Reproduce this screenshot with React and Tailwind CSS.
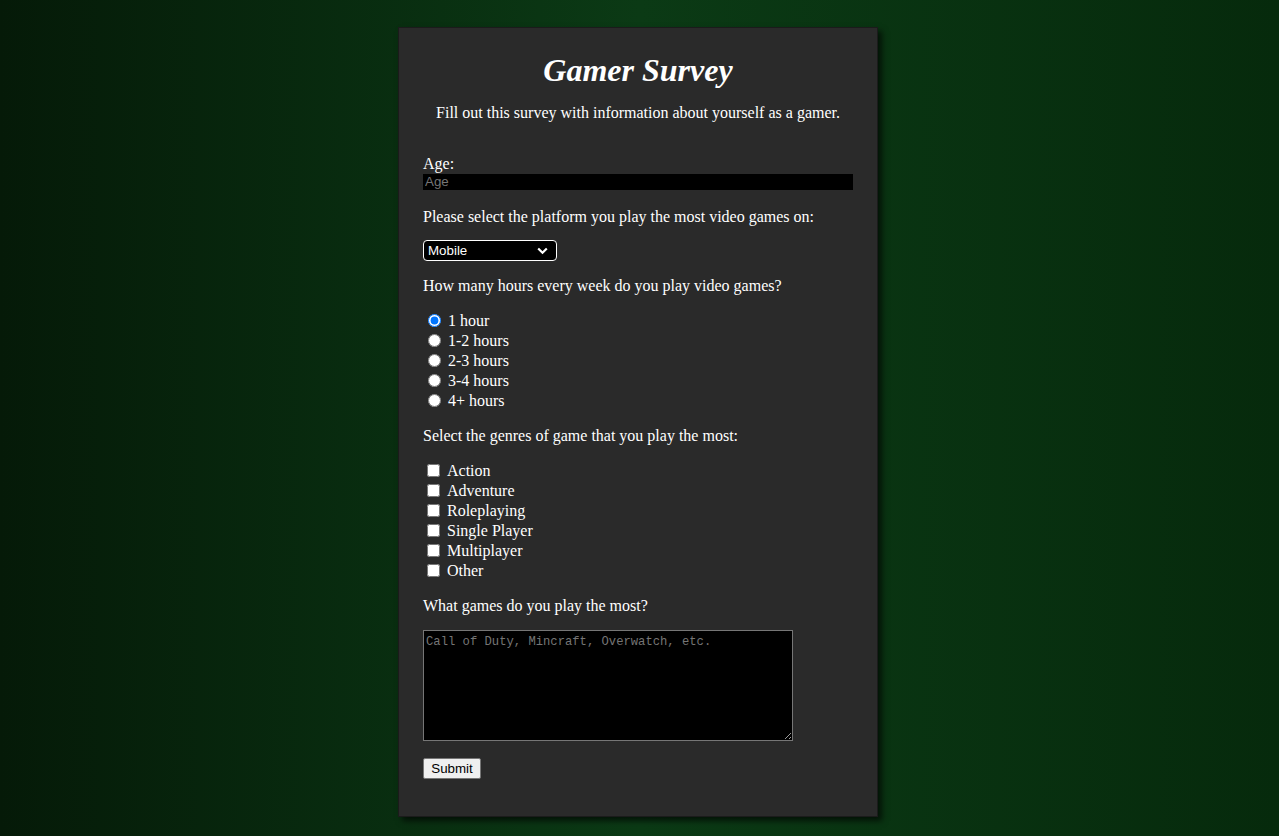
import React from "react";

const serif = { fontFamily: '"Liberation Serif", "Times New Roman", serif' };

export default function App() {
  const hours = ["1 hour", "1-2 hours", "2-3 hours", "3-4 hours", "4+ hours"];
  const genres = ["Action", "Adventure", "Roleplaying", "Single Player", "Multiplayer", "Other"];
  return (
    <div
      className="min-h-[836px] w-full bg-[linear-gradient(to_right,#051a08,#0b3a15_50%,#062a0c)] pt-[27px] pb-[19px] text-white"
      style={serif}
    >
      <div className="ml-[calc(50%-241.5px)] w-[480px] h-[790px] border border-[#1b1b1b] bg-[#2a2a2a] px-6 pt-[22px] shadow-[4px_4px_6px_rgba(0,0,0,0.65)] text-[16px]">
        <h1 className="text-center text-[32px] font-bold italic leading-[40px]">Gamer Survey</h1>
        <p className="mt-[13px] text-center leading-5">Fill out this survey with information about yourself as a gamer.</p>

        <div className="mt-[30px] leading-5 pt-px h-5">Age:</div>
        <input
          type="text"
          placeholder="Age"
          className="mt-px block h-4 w-full bg-black px-[2px] text-[13.33px] text-white outline-none placeholder:text-[#757575]"
          style={{ fontFamily: '"Liberation Sans", Arial, sans-serif' }}
        />

        <div className="mt-4 leading-5 pt-px h-5">Please select the platform you play the most video games on:</div>
        <div className="relative mt-[14px] h-[21px] w-[134px]">
          <select
            defaultValue="Mobile"
            className="block h-[21px] w-[134px] appearance-none rounded-[4px] border border-white bg-black pl-[4px] text-[13.33px] text-white outline-none"
            style={{ fontFamily: '"Liberation Sans", Arial, sans-serif' }}
          >
            <option>Mobile</option>
            <option>PC</option>
            <option>Console</option>
          </select>
          <svg className="pointer-events-none absolute right-[9px] top-[7px]" width="11" height="8" viewBox="0 0 11 8">
            <path d="M1.2 1.5 L5.5 5.8 L9.8 1.5" fill="none" stroke="white" strokeWidth="2.2" />
          </svg>
        </div>

        <div className="mt-[14px] leading-5 pt-px h-5">How many hours every week do you play video games?</div>
        <div className="mt-[15px]">
          {hours.map((h, i) => (
            <label key={h} className="flex h-5 items-center leading-5">
              <input type="radio" name="hours" defaultChecked={i === 0} className="ml-[5px] mr-[7px] h-[13px] w-[13px]" />
              <span className="pt-px">{h}</span>
            </label>
          ))}
        </div>

        <div className="mt-[15px] leading-5 pt-px h-5">Select the genres of game that you play the most:</div>
        <div className="mt-[15px]">
          {genres.map((g) => (
            <label key={g} className="flex h-5 items-center leading-5">
              <input type="checkbox" className="ml-[4px] mr-[7px] h-[13px] w-[13px]" />
              <span className="pt-px">{g}</span>
            </label>
          ))}
        </div>

        <div className="mt-[15px] leading-5 pt-px h-5">What games do you play the most?</div>
        <textarea
          placeholder="Call of Duty, Mincraft, Overwatch, etc."
          className="mt-[15px] block h-[111px] w-[370px] border border-[#767676] bg-black p-[2px] text-[12.2px] text-white outline-none placeholder:text-[#757575]"
          style={{ fontFamily: '"Liberation Mono", "Courier New", monospace' }}
        />

        <button
          type="button"
          className="mt-[17px] block h-[21px] w-[58px] rounded-[2px] border border-[#767676] bg-[#efefef] text-[13.33px] text-black"
          style={{ fontFamily: '"Liberation Sans", Arial, sans-serif' }}
        >
          Submit
        </button>
      </div>
    </div>
  );
}
